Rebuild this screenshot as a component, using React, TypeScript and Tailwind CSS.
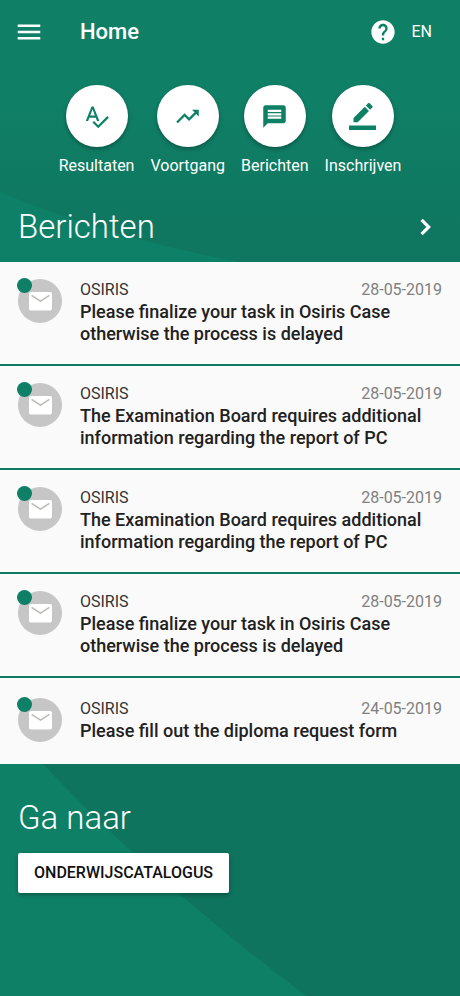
import React from "react";
import { MdHelp, MdMenu, MdMessage, MdSpellcheck, MdTrendingUp } from "react-icons/md";

type Message = { sender: string; date: string; subject: string };

const messages: Message[] = [
  { sender: "OSIRIS", date: "28-05-2019", subject: "Please finalize your task in Osiris Case otherwise the process is delayed" },
  { sender: "OSIRIS", date: "28-05-2019", subject: "The Examination Board requires additional information regarding the report of PC" },
  { sender: "OSIRIS", date: "28-05-2019", subject: "The Examination Board requires additional information regarding the report of PC" },
  { sender: "OSIRIS", date: "28-05-2019", subject: "Please finalize your task in Osiris Case otherwise the process is delayed" },
  { sender: "OSIRIS", date: "24-05-2019", subject: "Please fill out the diploma request form" },
];

function PencilIcon() {
  return (
    <svg viewBox="0 0 24 24" className="size-[27px]" fill="currentColor" aria-hidden="true">
      <path d="M17.75 7 14 3.25l-10 10V17h3.75l10-10zm2.96-2.96c.39-.39.39-1.02 0-1.41L18.37.29c-.39-.39-1.02-.39-1.41 0L15 2.25 18.75 6l1.96-1.96z" />
      <path d="M0 20h24v4H0z" />
    </svg>
  );
}

function EnvelopeIcon() {
  return (
    <svg viewBox="0 0 23 19" className="h-[19px] w-[23px]" aria-hidden="true">
      <rect width="23" height="18.5" rx="1.8" fill="white" />
      <path d="M2.6 3.4 11.5 9.2l8.9-5.8" fill="none" stroke="#b9b9b5" strokeWidth="1.4" />
    </svg>
  );
}

function ChevronIcon() {
  return (
    <svg viewBox="0 0 32 32" className="size-8" aria-hidden="true">
      <path d="M11.6 8.9 18.7 16l-7.1 7.1" fill="none" stroke="white" strokeWidth="3.2" />
    </svg>
  );
}

const shortcuts = [
  { label: "Resultaten", icon: <MdSpellcheck className="size-[27px]" /> },
  { label: "Voortgang", icon: <MdTrendingUp className="size-[27px]" /> },
  { label: "Berichten", icon: <MdMessage className="size-[27px]" /> },
  { label: "Inschrijven", icon: <PencilIcon /> },
];

function TopBackdrop() {
  return (
    <svg className="absolute inset-0 -z-10 size-full" viewBox="0 0 460 262" preserveAspectRatio="none" aria-hidden="true">
      <defs>
        <linearGradient id="top" x1="0" y1="0" x2="0" y2="1">
          <stop offset="0.35" stopColor="#0f8066" />
          <stop offset="0.9" stopColor="#0f765f" />
        </linearGradient>
      </defs>
      <rect width="460" height="262" fill="url(#top)" />
      <path d="M0 192Q110 238 240 262H0z" fill="#0e8067" />
    </svg>
  );
}

function BottomBackdrop() {
  return (
    <svg className="absolute inset-0 -z-10 size-full" viewBox="0 0 460 233" preserveAspectRatio="none" aria-hidden="true">
      <rect width="460" height="233" fill="#0f745d" />
      <path d="M0 0H43Q145 110 306 233H0z" fill="#0e8066" />
    </svg>
  );
}

function MessageRow({ message }: { message: Message }) {
  return (
    <li className="border-b-2 border-[#0f7a61] last:border-b-0">
      <a href="#bericht" className="flex min-h-[86px] items-center bg-[#fafafa] px-[18px] pt-[17px] pb-[19px]">
        <span className="flex flex-1 items-start gap-[18px]">
          <span className="relative flex size-11 shrink-0 items-center justify-center rounded-full bg-[#c6c6c6]">
            <EnvelopeIcon />
            <span className="absolute -top-px -left-px size-[15px] rounded-full bg-[#0e8066]" />
          </span>
          <span className="flex-1">
            <span className="flex justify-between text-base leading-[22px]">
              <span className="text-[#333333]">{message.sender}</span>
              <span className="text-[#808080]">{message.date}</span>
            </span>
            <span className="block text-lg leading-[22px] font-medium text-[#212121]">{message.subject}</span>
          </span>
        </span>
      </a>
    </li>
  );
}

export default function App() {
  return (
    <div className="flex min-h-screen flex-col bg-[#0f745d] font-[Roboto,sans-serif] text-white">
      <div className="relative isolate">
        <TopBackdrop />
        <header className="flex h-16 items-center px-[18px]">
          <button type="button" aria-label="Menu" className="-ml-1 flex">
            <MdMenu className="size-[30px]" />
          </button>
          <h1 className="ml-9 flex-1 text-[22px] leading-7 font-medium">Home</h1>
          <button type="button" aria-label="Help" className="flex">
            <MdHelp className="size-7" />
          </button>
          <button type="button" className="mr-2.5 ml-3.5 text-base">EN</button>
        </header>
        <nav className="flex justify-center gap-4 pt-[21px]">
          {shortcuts.map((s) => (
            <a key={s.label} href="#snelkoppeling" className="flex flex-col items-center">
              <span className="flex size-[62px] items-center justify-center rounded-full bg-white text-[#0e8066] shadow-[0_2px_4px_rgba(0,0,0,0.3)]">
                {s.icon}
              </span>
              <span className="mt-2 text-base leading-[22px]">{s.label}</span>
            </a>
          ))}
        </nav>
        <div className="mt-[30px] flex items-center justify-between pr-[18px] pb-[15px] pl-[18px]">
          <h2 className="text-[33px] leading-10 font-light">Berichten</h2>
          <button type="button" aria-label="Alle berichten" className="flex">
            <ChevronIcon />
          </button>
        </div>
      </div>
      <ul>
        {messages.map((m, i) => (
          <MessageRow key={i} message={m} />
        ))}
      </ul>
      <section className="relative isolate flex-1 px-[18px] pt-[34px]">
        <BottomBackdrop />
        <h2 className="text-[33px] leading-10 font-light">Ga naar</h2>
        <button
          type="button"
          className="mt-[15px] h-10 rounded-xs bg-white px-4 text-base font-medium text-[#111111] shadow-[0_2px_4px_rgba(0,0,0,0.3)]"
        >
          ONDERWIJSCATALOGUS
        </button>
      </section>
    </div>
  );
}
